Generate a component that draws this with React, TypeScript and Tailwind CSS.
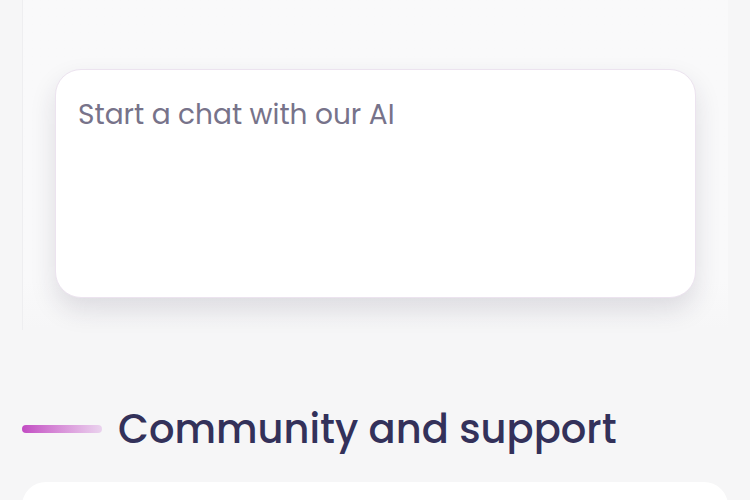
import * as React from "react";

const font = { fontFamily: '"Poppins", Inter, "Noto Sans", sans-serif' };

const ChatBox: React.FC = () => {
  return (
    <div className="rounded-[26px] border border-[#ece3ef] bg-white shadow-[0_12px_26px_rgba(40,30,60,0.13)] h-[229px]">
      <textarea
        placeholder="Start a chat with our AI"
        className="w-full h-full resize-none bg-transparent outline-none rounded-[26px] px-[22px] pt-[28px] text-[28px] leading-[34px] text-[#34325a] placeholder:text-[#77738a]"
        style={font}
      />
    </div>
  );
};

export default function App() {
  return (
    <div className="min-h-[500px] h-[500px] overflow-hidden bg-[#f6f6f7]" style={font}>
      <div className="mx-[22px] bg-gradient-to-b from-[#f9f9fa] from-85% to-[#f6f6f7] border-l border-[#eeeef0] px-[32px] pt-[69px] pb-[32px]">
        <ChatBox />
      </div>

      <div className="px-[22px] pt-[75px]">
        <div className="flex items-center gap-[16px]">
          <div className="w-[80px] h-[8px] rounded-full bg-gradient-to-r from-[#c24bc3] to-[#ead3ee]" />
          <h2 className="text-[40px] leading-[48px] font-medium text-[#33315a]">
            Community and support
          </h2>
        </div>
        <div className="mt-[29px] h-[80px] rounded-t-[24px] bg-white" />
      </div>
    </div>
  );
}
